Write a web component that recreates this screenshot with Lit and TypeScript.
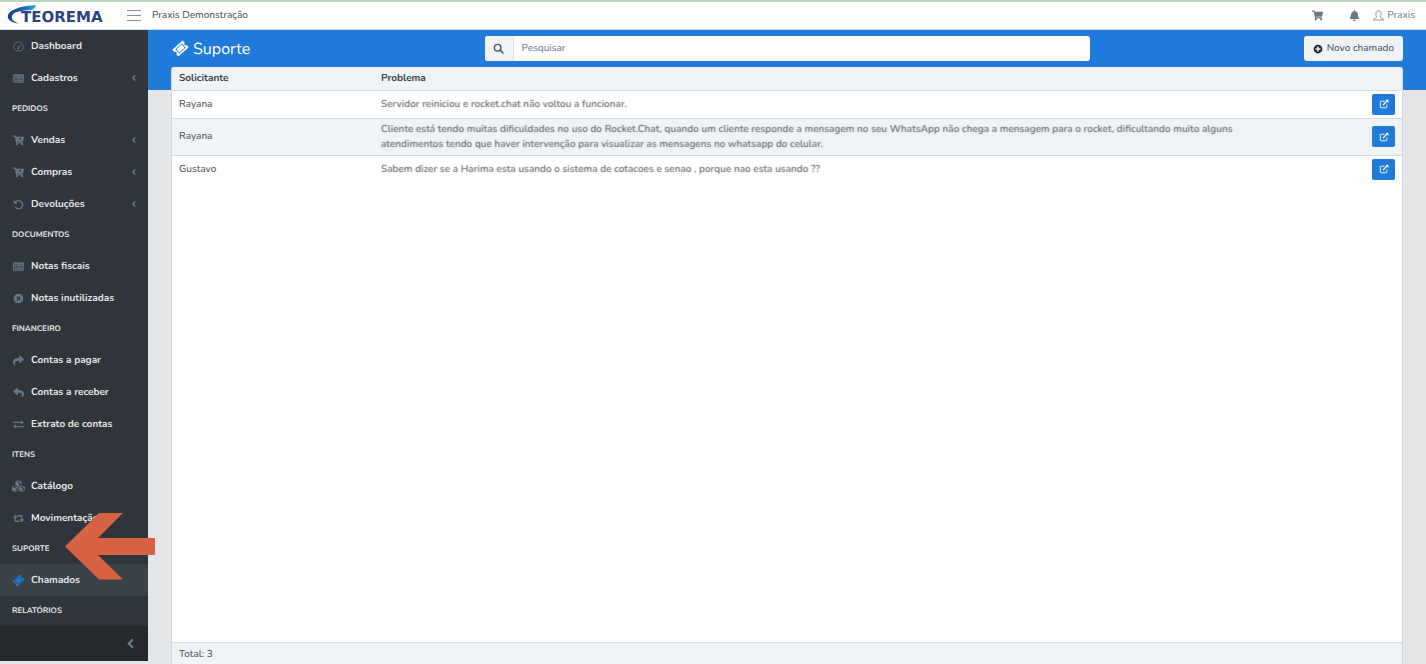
import { LitElement, html, css, svg, TemplateResult } from "lit";
import { customElement, property } from "lit/decorators.js";

const CART =
  "M528.12 301.319l47.273-208C578.806 78.301 567.391 64 551.99 64H159.208l-9.166-44.81C147.758 8.021 137.93 0 126.529 0H24C10.745 0 0 10.745 0 24v16c0 13.255 10.745 24 24 24h69.883l70.248 343.435C147.325 417.1 136 435.222 136 456c0 30.928 25.072 56 56 56s56-25.072 56-56c0-15.674-6.447-29.835-16.824-40h209.647C430.447 426.165 424 440.326 424 456c0 30.928 25.072 56 56 56s56-25.072 56-56c0-22.172-12.888-41.332-31.579-50.405l5.517-24.276c3.413-15.018-8.002-29.319-23.403-29.319H218.117l-6.545-32h293.145c11.206 0 20.92-7.754 23.403-18.681z";
const SHARE =
  "M503.691 189.836L327.687 37.851C312.281 24.546 288 35.347 288 56.015v80.053C127.371 137.907 0 170.1 0 322.326c0 61.441 39.581 122.309 83.333 154.132 13.653 9.931 33.111-2.533 28.077-18.631C66.066 312.814 132.917 274.316 288 272.085V360c0 20.7 24.3 31.453 39.687 18.164l176.004-152c11.071-9.562 11.086-26.753 0-36.328z";
const BELL =
  "M224 512c35.32 0 63.97-28.65 63.97-64H160.03c0 35.35 28.65 64 63.97 64zm215.39-149.71c-19.32-20.76-55.47-51.99-55.47-154.29 0-77.7-54.48-139.9-127.94-155.16V32c0-17.67-14.32-32-31.98-32s-31.98 14.33-31.98 32v20.84C118.56 68.1 64.08 130.3 64.08 208c0 102.3-36.15 133.53-55.47 154.29-6 6.45-8.66 14.16-8.61 21.71.11 16.4 12.98 32 32.1 32h383.8c19.12 0 32-15.6 32.1-32 .05-7.55-2.61-15.27-8.61-21.71z";

const cube = (x: number, y: number) => svg`
  <path fill="currentColor" fill-rule="evenodd" transform="translate(${x} ${y})"
    d="M4.500 0L9 1.800v5L4.500 9 0 6.800v-5zM4.500 1.100L2 2.100l2.500 1.100L7 2.100zM5.200 4.400v3L7.800 6.100v-2.900z"/>`;

const ICONS: Record<string, { box: string; art: TemplateResult }> = {
  gauge: {
    box: "0 0 16 16",
    art: svg`<path d="M4 14.2a7 7 0 1 1 8 0z" fill="none" stroke="currentColor" stroke-width="1.2"/>
      <path d="M7.4 10.6L11 6.4" stroke="currentColor" stroke-width="1.5"/>
      <circle cx="7.4" cy="10.6" r="1.3" fill="currentColor"/>`,
  },
  list: {
    box: "0 0 16 16",
    art: svg`<rect x="0" y="2" width="16" height="12" rx="1" fill="currentColor" fill-opacity=".45"/>
      <rect x=".6" y="2.6" width="14.8" height="10.8" rx="1" fill="none" stroke="currentColor" stroke-width="1.2"/>
      <path d="M1 4h14M3 7h1.600M6 7h7M3 10.500h1.600M6 10.500h7" stroke="currentColor" stroke-width="1.500"/>`,
  },
  cart: { box: "0 0 576 512", art: svg`<path d=${CART} fill="currentColor"/>` },
  cartDown: {
    box: "0 0 576 512",
    art: svg`<path d="${CART}M325 130h90v50l-45 50-45-50z" fill-rule="evenodd" fill="currentColor"/>`,
  },
  undo: {
    box: "0 0 16 16",
    art: svg`<path d="M3.4 4.6A6 6 0 1 1 3.4 12" fill="none" stroke="currentColor" stroke-width="2"/>
      <path d="M1.2 1.4v5.4h5.4z" fill="currentColor"/>`,
  },
  timesCircle: {
    box: "0 0 16 16",
    art: svg`<path fill-rule="evenodd" fill="currentColor" d="M8 1a7 7 0 1 0 0 14A7 7 0 0 0 8 1zM8 6.7L6.2 4.9 4.9 6.2 6.7 8 4.9 9.8l1.3 1.3L8 9.3l1.8 1.8 1.3-1.3L9.3 8l1.8-1.8-1.3-1.3z"/>`,
  },
  share: { box: "0 0 512 512", art: svg`<path d=${SHARE} fill="currentColor"/>` },
  reply: { box: "0 0 512 512", art: svg`<path d=${SHARE} transform="translate(512 0) scale(-1 1)" fill="currentColor"/>` },
  exchange: {
    box: "0 0 16 16",
    art: svg`<path d="M0 5h12M4 11h12" stroke="currentColor" stroke-width="1.8"/>
      <path d="M11.500 1.800L16 5l-4.500 3.200zM4.500 7.800L0 11l4.500 3.200z" fill="currentColor"/>`,
  },
  cubes: { box: "0 0 16 16", art: svg`${cube(3.5, -1)}${cube(-1.5, 7)}${cube(8.5, 7)}` },
  retweet: {
    box: "0 0 16 16",
    art: svg`<path d="M3.300 6v6h6M12.700 10V4h-6" fill="none" stroke="currentColor" stroke-width="2"/>
      <path d="M-.5 7l3.800-4.500L7.100 7zM8.900 9l3.800 4.500L16.500 9z" fill="currentColor"/>`,
  },
  ticket: {
    box: "0 0 16 16",
    art: svg`<path fill="currentColor" fill-rule="evenodd" transform="rotate(-42 8 8)"
      d="M.5 3.200h15v3.200a1.600 1.600 0 0 0 0 3.200v3.200H.5V9.600a1.600 1.600 0 0 0 0-3.200zM3.400 4.800v6.400h9.200V4.800zM4.300 5.700h7.400v4.600H4.300z"/>`,
  },
  bell: { box: "0 0 448 512", art: svg`<path d=${BELL} fill="currentColor"/>` },
  search: {
    box: "0 0 16 16",
    art: svg`<circle cx="6.800" cy="6.800" r="4.800" fill="none" stroke="currentColor" stroke-width="2"/>
      <path d="M10.400 10.400L14.600 14.600" stroke="currentColor" stroke-width="2.200" stroke-linecap="round"/>`,
  },
  plus: {
    box: "0 0 16 16",
    art: svg`<path fill-rule="evenodd" fill="currentColor" d="M8 1a7 7 0 1 0 0 14A7 7 0 0 0 8 1zM6.800 4v2.800H4v2.400h2.800V12h2.400V9.200H12V6.800H9.200V4z"/>`,
  },
  external: {
    box: "0 0 16 16",
    art: svg`<path d="M9 3.500H3.500a1.500 1.500 0 0 0-1.500 1.500v7.500A1.500 1.500 0 0 0 3.500 14H11a1.500 1.500 0 0 0 1.500-1.500V9" fill="none" stroke="currentColor" stroke-width="1.500"/>
      <path d="M6.500 9.500L13 3" stroke="currentColor" stroke-width="2"/>
      <path d="M10 1h5.200v5.200z" fill="currentColor"/>`,
  },
  user: {
    box: "0 0 16 16",
    art: svg`<path d="M5.800 10.200C3.400 8 3.600 1 8 1s4.600 7 2.200 9.200c.2 1.400 4.600 1.200 5.200 4.300H.6c.6-3.100 5-2.900 5.200-4.300z" fill="none" stroke="currentColor" stroke-width="1.200" stroke-linejoin="round"/>`,
  },
  chevron: { box: "0 0 16 16", art: svg`<path d="M10.500 3L5.500 8l5 5" fill="none" stroke="currentColor" stroke-width="2.400"/>` },
  chevronBold: { box: "0 0 16 16", art: svg`<path d="M11.500 2L5.500 8l6 6" fill="none" stroke="currentColor" stroke-width="3"/>` },
};

@customElement("ui-icon")
export class UiIcon extends LitElement {
  @property() name = "";

  static styles = css`
    :host {
      display: inline-flex;
      width: 11px;
      height: 11px;
      flex: none;
    }
    .glyph {
      width: 100%;
      height: 100%;
      overflow: visible;
    }
  `;

  render() {
    const icon = ICONS[this.name];
    return icon ? html`<svg class="glyph" viewBox=${icon.box} aria-hidden="true">${icon.art}</svg>` : null;
  }
}

interface Item {
  label: string;
  icon: string;
  nested?: boolean;
  active?: boolean;
}
interface Group {
  title?: string;
  pointer?: boolean;
  items: Item[];
}

const MENU: Group[] = [
  {
    items: [
      { label: "Dashboard", icon: "gauge" },
      { label: "Cadastros", icon: "list", nested: true },
    ],
  },
  {
    title: "PEDIDOS",
    items: [
      { label: "Vendas", icon: "cartDown", nested: true },
      { label: "Compras", icon: "cartDown", nested: true },
      { label: "Devoluções", icon: "undo", nested: true },
    ],
  },
  {
    title: "DOCUMENTOS",
    items: [
      { label: "Notas fiscais", icon: "list" },
      { label: "Notas inutilizadas", icon: "timesCircle" },
    ],
  },
  {
    title: "FINANCEIRO",
    items: [
      { label: "Contas a pagar", icon: "share" },
      { label: "Contas a receber", icon: "reply" },
      { label: "Extrato de contas", icon: "exchange" },
    ],
  },
  {
    title: "ITENS",
    items: [
      { label: "Catálogo", icon: "cubes" },
      { label: "Movimentação", icon: "retweet" },
    ],
  },
  { title: "SUPORTE", pointer: true, items: [{ label: "Chamados", icon: "ticket", active: true }] },
  { title: "RELATÓRIOS", items: [] },
];

const TICKETS = [
  { who: "Rayana", text: "Servidor reiniciou e rocket.chat não voltou a funcionar." },
  {
    who: "Rayana",
    text: "Cliente está tendo muitas dificuldades no uso do Rocket.Chat, quando um cliente responde a mensagem no seu WhatsApp não chega a mensagem para o rocket, dificultando muito alguns atendimentos tendo que haver intervenção para visualizar as mensagens no whatsapp do celular.",
  },
  {
    who: "Gustavo",
    text: "Sabem dizer se a Harima esta usando o sistema de cotacoes e senao , porque nao esta usando ??",
  },
];

@customElement("app-root")
export class AppRoot extends LitElement {
  static styles = css`
    :host {
      display: flex;
      flex-direction: column;
      height: 100vh;
      overflow: hidden;
      box-sizing: border-box;
      background: #e4e5e6;
      color: #4f565c;
      font: 500 10px/15px Nunito, Lato, sans-serif;
      text-rendering: geometricPrecision;
    }
    * {
      box-sizing: border-box;
    }
    button,
    input {
      font: inherit;
      color: inherit;
      margin: 0;
      text-rendering: inherit;
    }
    .topbar {
      display: flex;
      align-items: center;
      flex: none;
      height: 30px;
      padding-right: 11px;
      background: #fff;
      border-top: 2px solid #b9d6b6;
      border-bottom: 1px solid #d3dae0;
    }
    .logo {
      display: block;
      width: 120px;
      height: 27px;
      flex: none;
    }
    .word {
      font: bold 15px "DejaVu Sans", sans-serif;
      fill: #2b4480;
    }
    .burger {
      display: flex;
      flex-direction: column;
      justify-content: space-between;
      width: 14px;
      height: 11px;
      margin-left: 7px;
      padding: 0;
      border: 0;
      background: none;
    }
    .bar {
      height: 1px;
      background: #81919e;
    }
    .company {
      margin-left: 11px;
    }
    .tools {
      display: flex;
      align-items: center;
      margin-left: auto;
      color: #6b7883;
    }
    .tool {
      display: flex;
      align-items: center;
      color: inherit;
      text-decoration: none;
    }
    .tool + .tool {
      margin-left: 26px;
    }
    .tool.account {
      margin-left: 13px;
      gap: 3px;
      color: #73818f;
    }
    .body {
      display: flex;
      flex: 1;
      min-height: 0;
    }
    .sidebar {
      display: flex;
      flex-direction: column;
      flex: none;
      width: 148px;
      margin-bottom: 3px;
      background: #2f353a;
      color: #e4e5e6;
      font-weight: bold;
    }
    .nav {
      flex: 1;
      min-height: 0;
    }
    .menu {
      margin: 0;
      padding: 0;
      list-style: none;
    }
    .heading {
      position: relative;
      margin: 0;
      padding: 7px 12px 8px;
      font-size: 8px;
      line-height: 15px;
    }
    .pointer {
      position: absolute;
      left: 65px;
      top: -21px;
      width: 90px;
      height: 67px;
      z-index: 1;
    }
    .link {
      display: flex;
      align-items: center;
      height: 32px;
      padding: 0 10px 0 13px;
      color: inherit;
      text-decoration: none;
    }
    .link.active {
      background: #3a4248;
    }
    .label {
      margin-left: 7px;
    }
    .mark {
      color: #677683;
    }
    .active .mark {
      color: #207ada;
    }
    .caret {
      width: 8px;
      height: 8px;
      margin-left: auto;
      color: #73818f;
    }
    .minimizer {
      display: flex;
      align-items: center;
      justify-content: flex-end;
      flex: none;
      height: 35px;
      padding: 0 12px;
      border: 0;
      background: #25292d;
      color: #73818f;
    }
    .main {
      display: flex;
      flex-direction: column;
      flex: 1;
      min-width: 0;
      padding: 0 23px;
      background: linear-gradient(#207ada, #207ada) top / 100% 60px no-repeat;
    }
    .pagehead {
      display: grid;
      grid-template-columns: 1fr 2fr 1fr;
      align-items: center;
      gap: 11px;
      flex: none;
      height: 37px;
    }
    .title {
      display: flex;
      align-items: center;
      gap: 5px;
      margin: 0;
      padding-left: 2px;
      color: #fff;
      font-size: 16px;
      line-height: 20px;
      font-weight: normal;
    }
    .title ui-icon {
      width: 15px;
      height: 15px;
    }
    .search {
      display: flex;
      height: 25px;
      overflow: hidden;
      border-radius: 3px;
      background: #fff;
    }
    .addon {
      display: flex;
      align-items: center;
      justify-content: center;
      width: 29px;
      border-right: 1px solid #e0e4e8;
      background: #f0f3f5;
    }
    .field {
      flex: 1;
      min-width: 0;
      padding: 0 8px;
      border: 0;
      outline: 0;
      background: none;
    }
    .field::placeholder {
      color: #73818f;
      opacity: 1;
    }
    .create {
      display: flex;
      align-items: center;
      justify-self: end;
      gap: 4px;
      height: 25px;
      padding: 0 9px;
      border: 0;
      border-radius: 3px;
      background: #f0f3f5;
    }
    .create ui-icon {
      width: 10px;
      height: 10px;
      color: #23282c;
    }
    .card {
      display: flex;
      flex-direction: column;
      flex: 1;
      min-height: 0;
      border: 1px solid #d2d8dd;
      border-top-color: #f0f3f5;
      border-bottom: 0;
      border-radius: 3px 3px 0 0;
      background: #fff;
      overflow: hidden;
    }
    .scroll {
      flex: 1;
      min-height: 0;
    }
    .list {
      width: 100%;
      table-layout: fixed;
      border-collapse: collapse;
    }
    .who {
      width: 202px;
    }
    .act {
      width: 120px;
    }
    .th,
    .td {
      padding: 3px 7px;
      text-align: left;
      border-bottom: 1px solid #d5dce1;
    }
    .th {
      height: 22px;
      background: #f0f3f5;
      color: #3b4248;
      font-weight: bold;
    }
    .row:nth-child(even) {
      background: #f0f3f5;
    }
    .row:last-child .td {
      border-bottom: 0;
    }
    .td.open {
      text-align: right;
    }
    .masked {
      color: transparent;
      font-weight: 600;
      text-shadow: 0 0 1px #62676b;
    }
    .go {
      display: inline-flex;
      align-items: center;
      justify-content: center;
      width: 23px;
      height: 21px;
      padding: 0;
      border: 0;
      border-radius: 2px;
      background: #207ada;
      color: #fff;
      vertical-align: top;
    }
    .go ui-icon {
      width: 10px;
      height: 10px;
    }
    .total {
      flex: none;
      height: 22px;
      padding: 4px 7px;
      border-top: 1px solid #d5dce1;
      background: #f0f3f5;
    }
  `;

  private renderItem(item: Item) {
    return html`<li>
      <a class="link ${item.active ? "active" : ""}" href="#">
        <ui-icon class="mark" name=${item.icon}></ui-icon>
        <span class="label">${item.label}</span>
        ${item.nested ? html`<ui-icon class="caret" name="chevron"></ui-icon>` : null}
      </a>
    </li>`;
  }

  private renderGroup(group: Group) {
    return html`
      ${group.title
        ? html`<h2 class="heading">
            ${group.title}
            ${group.pointer
              ? html`<svg class="pointer" viewBox="0 0 90 67" aria-hidden="true">
                  <path d="M0 33.500L34 0h24L33 25h57v17H33l25 24.500H34z" fill="#d66244" />
                </svg>`
              : null}
          </h2>`
        : null}
      <ul class="menu">
        ${group.items.map((i) => this.renderItem(i))}
      </ul>
    `;
  }

  render() {
    return html`
      <header class="topbar">
        <svg class="logo" viewBox="0 0 120 27" role="img" aria-label="Teorema">
          <defs>
            <linearGradient id="swoosh">
              <stop offset="0" stop-color="#1f3f80" />
              <stop offset=".5" stop-color="#1d5ca3" />
              <stop offset="1" stop-color="#25b5ea" />
            </linearGradient>
          </defs>
          <path
            d="M36.500 3.200C26 3 9 6.500 7.800 14c-.3 4 4 7 11.400 7.600C12.500 19.500 10.500 16 12.500 13 15 9.500 21 8.500 32 8c2-1.500 3.500-3.200 4.500-4.800z"
            fill="url(#swoosh)"
          />
          <text class="word" x="21" y="20">TEOREMA</text>
        </svg>
        <button class="burger" aria-label="Menu">
          <span class="bar"></span><span class="bar"></span><span class="bar"></span>
        </button>
        <span class="company">Praxis Demonstração</span>
        <div class="tools">
          <a class="tool" href="#" aria-label="Carrinho"><ui-icon name="cart"></ui-icon></a>
          <a class="tool" href="#" aria-label="Notificações"><ui-icon name="bell"></ui-icon></a>
          <a class="tool account" href="#"><ui-icon name="user"></ui-icon>Praxis</a>
        </div>
      </header>
      <div class="body">
        <aside class="sidebar">
          <nav class="nav">${MENU.map((g) => this.renderGroup(g))}</nav>
          <button class="minimizer" aria-label="Recolher menu"><ui-icon name="chevronBold"></ui-icon></button>
        </aside>
        <main class="main">
          <div class="pagehead">
            <h1 class="title"><ui-icon name="ticket"></ui-icon>Suporte</h1>
            <div class="search">
              <label class="addon" for="q" aria-label="Pesquisar"><ui-icon name="search"></ui-icon></label>
              <input class="field" id="q" type="text" placeholder="Pesquisar" />
            </div>
            <button class="create"><ui-icon name="plus"></ui-icon>Novo chamado</button>
          </div>
          <section class="card">
            <div class="scroll">
              <table class="list">
                <thead>
                  <tr>
                    <th class="th who">Solicitante</th>
                    <th class="th">Problema</th>
                    <th class="th act"></th>
                  </tr>
                </thead>
                <tbody>
                  ${TICKETS.map(
                    (t) => html`<tr class="row">
                      <td class="td">${t.who}</td>
                      <td class="td masked">${t.text}</td>
                      <td class="td open">
                        <button class="go" aria-label="Abrir chamado"><ui-icon name="external"></ui-icon></button>
                      </td>
                    </tr>`
                  )}
                </tbody>
              </table>
            </div>
            <footer class="total">Total: 3</footer>
          </section>
        </main>
      </div>
    `;
  }
}
